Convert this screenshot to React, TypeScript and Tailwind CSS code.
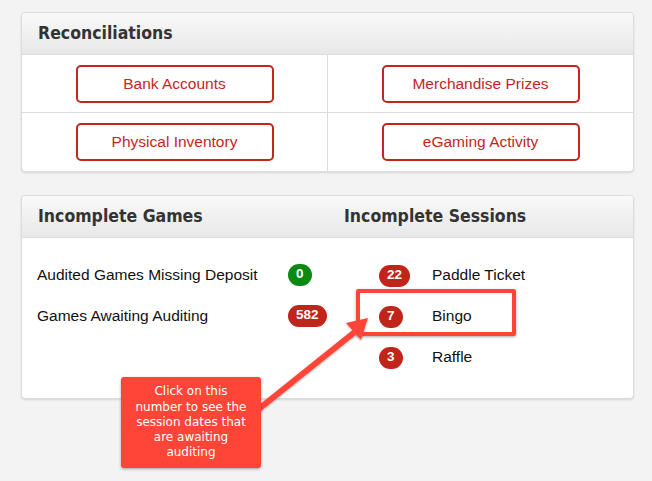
const headerFont = { fontFamily: '"DejaVu Sans Condensed", "DejaVu Sans", Verdana, sans-serif' };

const ReconButton = ({ label }: { label: string }) => (
  <button className="w-[198px] h-[38px] rounded-[5px] border-2 border-[#c4261d] bg-white text-[15.5px] text-[#c4261d]">
    {label}
  </button>
);

const Badge = ({ value, green }: { value: string; green?: boolean }) => (
  <span
    className={
      "inline-flex h-[22px] min-w-[23px] items-center justify-center rounded-full px-[8px] text-[13.5px] font-bold text-white " +
      (green ? "bg-[#0b8a12]" : "bg-[#c0241b]")
    }
  >
    {value}
  </span>
);

const PanelHeader = ({ children }: { children: React.ReactNode }) => (
  <div className="flex h-[42px] items-center border-b border-[#dcdcdc] bg-gradient-to-b from-[#f9f9f9] to-[#e8e8e8] rounded-t-[4px]">
    {children}
  </div>
);

const sessions = [
  { count: "22", name: "Paddle Ticket" },
  { count: "7", name: "Bingo" },
  { count: "3", name: "Raffle" },
];

export default function App() {
  return (
    <div
      className="relative min-h-[481px] w-[652px] bg-[#f3f3f3] pl-[21px] pt-[12px]"
      style={{ fontFamily: '"Liberation Sans", Arial, sans-serif' }}
    >
      {/* Reconciliations */}
      <div className="w-[613px] rounded-[4px] border border-[#dcdcdc] bg-white shadow-[0_1px_2px_rgba(0,0,0,0.12)]">
        <PanelHeader>
          <h2 className="pl-[16px] text-[17.5px] font-bold text-[#333]" style={headerFont}>
            Reconciliations
          </h2>
        </PanelHeader>
        <div className="grid grid-cols-[306px_1fr]">
          <div className="flex h-[58px] items-center justify-center border-r border-b border-[#dcdcdc]">
            <ReconButton label="Bank Accounts" />
          </div>
          <div className="flex h-[58px] items-center justify-center border-b border-[#dcdcdc]">
            <ReconButton label="Merchandise Prizes" />
          </div>
          <div className="flex h-[58px] items-center justify-center border-r border-[#dcdcdc]">
            <ReconButton label="Physical Inventory" />
          </div>
          <div className="flex h-[58px] items-center justify-center">
            <ReconButton label="eGaming Activity" />
          </div>
        </div>
      </div>

      {/* Incomplete games / sessions */}
      <div className="mt-[23px] w-[613px] rounded-[4px] border border-[#dcdcdc] bg-white shadow-[0_1px_2px_rgba(0,0,0,0.12)]">
        <PanelHeader>
          <h2 className="w-[306px] pl-[16px] text-[17.5px] font-bold text-[#333]" style={headerFont}>
            Incomplete Games
          </h2>
          <h2 className="pl-[16px] text-[17.5px] font-bold text-[#333]" style={headerFont}>
            Incomplete Sessions
          </h2>
        </PanelHeader>
        <div className="flex h-[160px] pt-[16px] text-[15.5px] text-[#111]">
          <div className="w-[306px] pl-[15px]">
            <div className="flex h-[41px] items-center">
              <span className="w-[251px]">Audited Games Missing Deposit</span>
              <Badge value="0" green />
            </div>
            <div className="flex h-[41px] items-center">
              <span className="w-[251px]">Games Awaiting Auditing</span>
              <Badge value="582" />
            </div>
          </div>
          <div className="pl-[51px]">
            {sessions.map((s) => (
              <div key={s.name} className="flex h-[41px] items-center">
                <span className="w-[53px]">
                  <Badge value={s.count} />
                </span>
                <span>{s.name}</span>
              </div>
            ))}
          </div>
        </div>
      </div>

      {/* annotation: highlight box + arrow */}
      <div className="absolute left-[356px] top-[289px] h-[47px] w-[160px] rounded-[2px] border-[4px] border-[#ff4537] shadow-[0_1px_3px_rgba(0,0,0,0.35)]" />
      <svg className="absolute left-0 top-0" width="652" height="481" viewBox="0 0 652 481">
        <defs>
          <filter id="sh" x="-20%" y="-20%" width="140%" height="140%">
            <feDropShadow dx="0" dy="1" stdDeviation="1" floodColor="#000" floodOpacity="0.3" />
          </filter>
        </defs>
        <g filter="url(#sh)" fill="#ff4537">
          <line x1="255" y1="412" x2="356" y2="331" stroke="#ff4537" strokeWidth="6" />
          <polygon points="368,318 346,323 361,340" />
        </g>
      </svg>

      {/* callout */}
      <div
        className="absolute left-[121px] top-[377px] flex h-[91px] w-[140px] items-center justify-center rounded-[3px] bg-[#ff4537] px-[12px] text-center text-[12px] leading-[15.3px] text-white shadow-[0_1px_3px_rgba(0,0,0,0.35)]"
        style={{ fontFamily: '"DejaVu Sans", Verdana, sans-serif' }}
      >
        Click on this number to see the session dates that are awaiting auditing
      </div>
    </div>
  );
}
